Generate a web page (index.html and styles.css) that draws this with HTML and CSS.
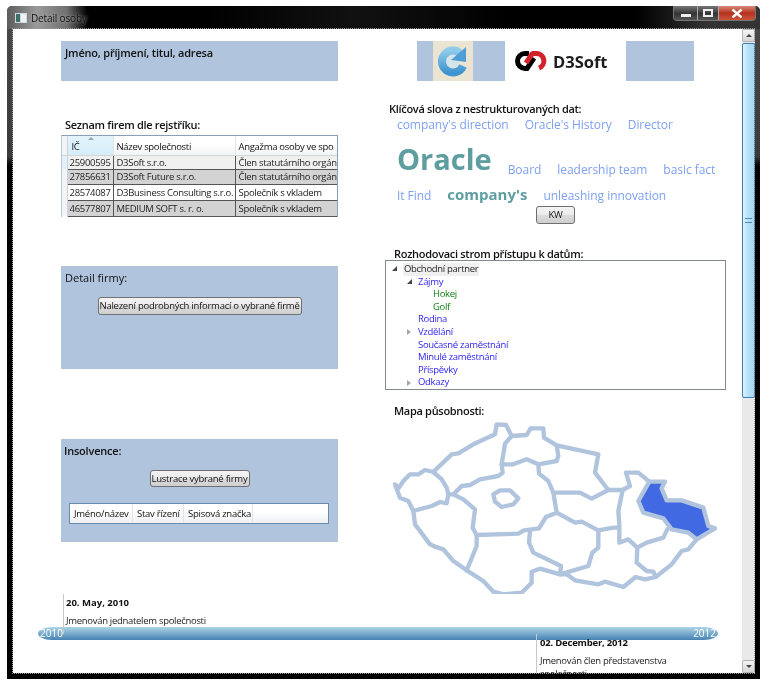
FILE: index.html
```html
<!DOCTYPE html>
<html lang="cs">
<head>
<meta charset="utf-8">
<title>Detail osoby</title>
<link rel="stylesheet" href="styles.css">
</head>
<body>
<div class="window">
  <header class="titlebar">
    <svg class="app-icon" width="12" height="10" viewBox="0 0 12 10"><rect width="12" height="10" fill="#cfd8dc"/><rect x="1" y="1" width="4" height="8" fill="#3d6f6c"/><rect x="6" y="1" width="5" height="8" fill="#eef3f6"/></svg>
    <span class="title">Detail osoby</span>
    <div class="controls">
      <div class="ctl ctl-min"><span class="min-glyph"></span></div>
      <div class="ctl ctl-max"><span class="max-glyph"></span></div>
      <div class="ctl ctl-close"><svg width="12" height="9" viewBox="0 0 12 9"><path d="M1.5 .5 L10.5 8.5 M10.5 .5 L1.5 8.5" stroke="#fff" stroke-width="2.4"/></svg></div>
    </div>
  </header>
  <div class="client">
    <main class="main">
      <div class="columns">
        <section class="left">
          <div class="name-box">Jméno, příjmení, titul, adresa</div>
          <div class="label label-firms">Seznam firem dle rejstříku:</div>
          <div class="grid-wrap">
            <table class="firms">
              <colgroup><col class="c0"><col class="c1"><col class="c2"><col class="c3"></colgroup>
              <thead>
                <tr><th class="gutter"></th><th class="sorted"><span class="sort-arrow"></span>IČ</th><th>Název společnosti</th><th>Angažma osoby ve spo</th></tr>
              </thead>
              <tbody>
                <tr class="r-sel"><td class="gutter"></td><td>25900595</td><td>D3Soft s.r.o.</td><td>Člen statutárního orgán</td></tr>
                <tr class="r-alt r-b"><td class="gutter"></td><td>27856631</td><td>D3Soft Future s.r.o.</td><td>Člen statutárního orgán</td></tr>
                <tr class="r-plain"><td class="gutter"></td><td>28574087</td><td>D3Business Consulting s.r.o.</td><td>Společník s vkladem</td></tr>
                <tr class="r-alt r-d"><td class="gutter"></td><td>46577807</td><td>MEDIUM SOFT s. r. o.</td><td>Společník s vkladem</td></tr>
              </tbody>
            </table>
          </div>
          <div class="panel panel-detail">
            <div class="label panel-title">Detail firmy:</div>
            <div class="center"><button class="btn btn-detail">Nalezení podrobných informací o vybrané firmě</button></div>
          </div>
          <div class="panel panel-insolv">
            <div class="label panel-title">Insolvence:</div>
            <div class="center"><button class="btn btn-lustrace">Lustrace vybrané firmy</button></div>
            <div class="insolv-head">
              <span class="ih ih1">Jméno/název</span><span class="ih ih2">Stav řízení</span><span class="ih ih3">Spisová značka</span>
            </div>
          </div>
        </section>
        <section class="right">
          <div class="banner">
            <div class="b-blue b1"></div>
            <div class="b-icon">
              <svg width="40" height="40" viewBox="0 0 40 40">
                <defs><linearGradient id="swirl" x1="0" y1="0" x2="0" y2="1"><stop offset="0" stop-color="#8ecbea"/><stop offset="1" stop-color="#3f94cf"/></linearGradient></defs>
                <circle cx="19" cy="20" r="7" fill="#d3e4ea"/>
                <path d="M27 12 A11 11 0 1 0 30 25" fill="none" stroke="url(#swirl)" stroke-width="8"/>
                <path d="M33 6 L33 21 L18 19 Z" fill="#4f9fd6"/>
              </svg>
            </div>
            <div class="b-blue b2"></div>
            <div class="b-logo">
              <svg width="33" height="20" viewBox="0 0 33 20"><path d="M15 2.5 H11 A7.5 7.5 0 0 0 11 17.5 H13 L20 7" fill="none" stroke="#000" stroke-width="5"/><path d="M12 12 L18 3 L19 2.5 H22 A7.5 7.5 0 0 1 25 17" fill="none" stroke="#d2232a" stroke-width="5"/></svg>
              <span class="logo-text">D3Soft</span>
            </div>
            <div class="b-blue b3"></div>
          </div>
          <div class="label label-kw">Klíčová slova z nestrukturovaných dat:</div>
          <div class="cloud">
            <div class="cloud-row row-a"><span class="tag">company's direction</span><span class="tag">Oracle's History</span><span class="tag">Director</span></div>
            <div class="cloud-row row-b"><span class="tag-xl">Oracle</span><span class="tag">Board</span><span class="tag">leadership team</span><span class="tag">basic fact</span></div>
            <div class="cloud-row row-c"><span class="tag">It Find</span><span class="tag-l">company's</span><span class="tag">unleashing innovation</span></div>
            <div class="center"><button class="btn btn-kw">KW</button></div>
          </div>
          <div class="label label-tree">Rozhodovaci strom přístupu k datům:</div>
          <div class="tree">
            <div class="node lvl0"><span class="arrow open"></span><span class="sel">Obchodní partner</span></div>
            <div class="node lvl1 blue"><span class="arrow open"></span>Zájmy</div>
            <div class="node lvl2 green"><span class="arrow none"></span>Hokej</div>
            <div class="node lvl2 green"><span class="arrow none"></span>Golf</div>
            <div class="node lvl1 blue"><span class="arrow none"></span>Rodina</div>
            <div class="node lvl1 blue"><span class="arrow closed"></span>Vzdělání</div>
            <div class="node lvl1 blue"><span class="arrow none"></span>Současné zaměstnání</div>
            <div class="node lvl1 blue"><span class="arrow none"></span>Minulé zaměstnání</div>
            <div class="node lvl1 blue"><span class="arrow none"></span>Příspěvky</div>
            <div class="node lvl1 blue"><span class="arrow closed"></span>Odkazy</div>
          </div>
          <div class="label label-map">Mapa působnosti:</div>
          <svg class="map" width="340" height="176" viewBox="15 21 1020 528">
            <g class="regions">
              <path d="M45 220 L57 230 L70 210 L90 190 L115 190 L135 177 L160 183 L185 205 L200 230 L205 250 L200 277 L180 273 L155 285 L100 300 L85 270 L60 260 Z"/>
              <path d="M160 183 L215 130 L235 127 L280 100 L345 70 L350 40 L378 42 L395 75 L440 72 L452 52 L490 52 L492 80 L530 103 L655 130 L645 185 L685 237 L728 237 L750 225 L738 185 L775 185 L808 212"/>
              <path d="M685 237 L635 263 L600 245 L520 245 L505 210 L477 188 L475 160"/>
              <path d="M395 75 L375 98 L365 160 L400 160 L440 145 L475 160 L530 150 L535 135 L530 103"/>
              <path d="M365 160 L368 185 L355 195 L300 205 L270 222 L245 225 L220 250 L205 250 M220 250 L250 265 L285 295 L278 350 L290 372 L415 368 L432 358 L477 352 L498 318 L530 305 L520 245"/>
              <path d="M340 250 L360 238 L390 238 L415 262 L400 280 L365 288 L345 272 Z"/>
              <path d="M100 300 L105 340 L150 400 L165 407 L190 415 L220 450 L260 478 L290 405 L290 372"/>
              <path d="M260 478 L310 510 L340 542 L370 550 L425 545 L455 515 L455 482 L480 473 L540 490 L560 490 L585 508 L655 520 L675 512 L730 528 L767 498 L795 505 L827 498 L875 460 L905 420 L925 415 L950 385"/>
              <path d="M450 360 L447 395 L460 425 L543 465 L540 490 L625 465 L637 425 L655 410 L655 358 L605 332 L585 335 L530 305"/>
              <path d="M655 358 L700 350 L718 350 M728 237 L715 300 L718 340 L718 395 L745 385 L772 410 L770 455 L800 480 L820 482 L827 498 M772 410 L800 395 L850 380 L862 355"/>
              <path class="region-on" d="M808 212 L855 212 L845 232 L860 268 L905 268 L970 290 L985 345 L1005 352 L950 385 L925 365 L875 355 L850 322 L790 305 L775 270 Z"/>
            </g>
          </svg>
        </section>
      </div>
      <section class="timeline">
        <div class="bar"><span>2010</span><span>2012</span></div>
        <div class="event event-a">
          <div class="ev-date">20. May, 2010</div>
          <div class="ev-text">Jmenován jednatelem společnosti</div>
        </div>
        <div class="event event-b">
          <div class="ev-date ev-date-long">02. December, 2012</div>
          <div class="ev-text">Jmenován člen představenstva společnosti</div>
        </div>
      </section>
    </main>
    <aside class="scrollbar">
      <div class="sb-btn"><span class="sb-up"></span></div>
      <div class="sb-track">
        <div class="sb-thumb"><span class="grip"></span></div>
      </div>
      <div class="sb-btn"><span class="sb-down"></span></div>
    </aside>
  </div>
</div>
</body>
</html>
```
FILE: styles.css
```css
* { box-sizing: border-box; }
html, body { margin: 0; padding: 0; background: #fff; }
body { font-family: "Open Sans", "Liberation Sans", sans-serif; color: #111; }

.window {
  width: 753px;
  height: 673px;
  margin: 6px 0 0 7px;
  background: linear-gradient(180deg, #4a4a4a 0, #3a3a3a 150px, #000 160px);
  border-radius: 5px 5px 0 0;
  display: flex;
  flex-direction: column;
  overflow: hidden;
}

/* title bar */
.titlebar {
  height: 23px;
  flex: none;
  display: flex;
  align-items: center;
  padding: 0 4px 0 8px;
  background: linear-gradient(90deg, #5c5c5c 0, #9a9a9a 30px, #707070 60px, #000 80px, #000 200px, #111 350px, #000 500px, #000 630px, #333 700px);
}
.app-icon { flex: none; margin-right: 4px; margin-top: 1px; }
.title { font-size: 10px; letter-spacing: -.15px; color: #111; text-shadow: 0 0 3px #bbb; margin-top: 1px; filter: blur(.3px); }
.controls { margin-left: auto; display: flex; align-self: flex-start; height: 15px; border: 1px solid #777; border-top: 0; border-radius: 0 0 4px 4px; overflow: hidden; }
.ctl { display: flex; align-items: center; justify-content: center; height: 100%; }
.ctl-min { width: 24px; background: linear-gradient(180deg, #777, #333 55%, #555); border-right: 1px solid #aaa; }
.ctl-max { width: 21px; background: linear-gradient(180deg, #777, #333 55%, #555); border-right: 1px solid #aaa; }
.ctl-close { width: 36px; background: linear-gradient(180deg, #d98a78, #b5321e 50%, #c9543c); }
.min-glyph { width: 10px; height: 3px; margin-top: 5px; background: #eee; }
.max-glyph { width: 10px; height: 8px; border: 2px solid #eee; }

/* client area */
.client {
  flex: 1;
  min-height: 0;
  margin: 0 6px 6px 6px;
  background: #fff;
  outline: 1px dotted #999;
  display: flex;
}
.main { width: 729px; flex: none; overflow: hidden; display: flex; flex-direction: column; filter: blur(.35px); }
.columns { display: grid; grid-template-columns: 372px 357px; height: 565px; flex: none; }

/* left column */
.left { padding: 12px 0 0 48px; }
.name-box {
  width: 277px;
  height: 40px;
  background: #b0c4de;
  font-size: 11px;
  font-weight: 600;
  letter-spacing: -.2px;
  line-height: 15px;
  padding: 4px 0 0 4px;
}
.label { font-size: 11px; font-weight: 600; letter-spacing: -.3px; line-height: 14px; color: #111; white-space: nowrap; }
.label-firms { margin-top: 37px; padding-left: 4px; }
.grid-wrap { width: 277px; height: 82px; margin-top: 3px; border: 1px solid #8aa0b8; border-left-color: #b9c6d6; border-bottom-width: 0; overflow: hidden; }
.firms { width: 276px; border-collapse: collapse; table-layout: fixed; font-size: 9.5px; letter-spacing: -.3px; line-height: 13px; }
.c0 { width: 5px; } .c1 { width: 46px; } .c2 { width: 122px; } .c3 { width: 103px; }
.firms th { height: 19px; font-weight: 400; text-align: left; padding: 3px 0 0 3px; white-space: nowrap; overflow: hidden; background: linear-gradient(180deg, #fff 40%, #f2f3f4); border-right: 1px solid #e3e6e9; border-bottom: 1px solid #d5d5d5; }
.firms th.sorted { background: linear-gradient(180deg, #e3f3fc, #d6edfa); position: relative; padding-left: 4px; }
.sort-arrow { position: absolute; left: 20px; top: 1px; width: 0; height: 0; border: 3px solid transparent; border-top: 0; border-bottom: 3px solid #9aa6b2; }
.firms td { height: 15px; padding: 0 0 0 3px; white-space: nowrap; overflow: hidden; border-bottom: 1px solid #555; border-right: 1px solid #555; color: #222; }
.firms td:nth-child(2) { padding-left: 2px; }
.firms td:last-child, .firms th:last-child { border-right: 0; }
.firms .gutter { padding: 0; background: #f4f4f4; border-right: 1px solid #c6d3e0; }
.firms td.gutter { border-bottom: 0; }
.r-sel td { background: #f0f0f0; height: 14px; }
.r-alt td { background: #d3d3d3; }
.r-plain td { background: #fff; height: 16px; }
.r-d td { height: 16px; }
.r-sel td.gutter { background: #e3f1fa; }
.r-plain td.gutter, .r-alt td.gutter { background: #f4f4f4; }

.panel { width: 277px; height: 103px; background: #b0c4de; }
.panel-title { padding: 5px 0 0 4px; line-height: 14px; font-weight: 500; letter-spacing: 0; }
.panel-detail { margin-top: 49px; }
.panel-insolv { margin-top: 70px; }
.panel-insolv .panel-title { font-weight: 600; padding-left: 3px; letter-spacing: -.2px; }
.center { display: flex; justify-content: center; }
.btn {
  font-family: inherit;
  color: #111;
  font-size: 9.5px;
  letter-spacing: -.25px;
  line-height: 12px;
  padding: 0;
  border: 1px solid #707070;
  border-radius: 3px;
  background: linear-gradient(180deg, #f3f3f3 0, #ebebeb 48%, #dcdcdc 52%, #cfcfcf 100%);
  white-space: nowrap;
}
.btn-detail { width: 204px; height: 18px; margin-top: 12px; }
.btn-lustrace { width: 100px; height: 17px; margin-top: 12px; }
.btn-kw { width: 39px; height: 18px; }
.insolv-head {
  width: 260px;
  height: 21px;
  margin: 16px 0 0 8px;
  border: 1px solid #688caf;
  background: linear-gradient(180deg, #fff 40%, #eff0f2);
  display: flex;
  font-size: 9.5px;
  letter-spacing: -.25px;
  line-height: 19px;
}
.ih { padding-left: 4px; border-right: 1px solid #e3e6e9; white-space: nowrap; overflow: hidden; }
.ih1 { width: 63px; } .ih2 { width: 51px; } .ih3 { width: 69px; }

/* right column */
.right { padding-top: 12px; display: flex; flex-direction: column; }
.banner { display: flex; height: 40px; margin-left: 32px; }
.b-blue { background: #b0c4de; }
.b1 { width: 16px; } .b2 { width: 32px; } .b3 { width: 68px; }
.b-icon { width: 40px; background: #ebe4d2; }
.b-logo { width: 121px; display: flex; align-items: center; padding-left: 9px; gap: 6px; }
.logo-text { font-size: 16.5px; font-weight: 700; color: #1d1d1f; }
.label-kw { margin-top: 21px; padding-left: 4px; }
.cloud { width: 341px; height: 122px; padding-top: 1px; display: flex; flex-direction: column; }
.cloud-row { display: flex; padding-left: 12px; gap: 16px; white-space: nowrap; }
.tag { font-size: 12px; letter-spacing: -.05px; line-height: 16px; color: #7ea0f2; }
.tag-xl { font-size: 29px; line-height: 42px; font-weight: 700; color: #5f9ea0; }
.tag-l { font-size: 15px; line-height: 20px; font-weight: 700; color: #5f9ea0; }
.row-a { height: 16px; }
.row-b { height: 47px; align-items: flex-end; }
.row-b .tag { position: relative; top: -2px; }
.row-c { height: 26px; padding-bottom: 2px; align-items: flex-end; }
.label-tree { margin-top: 9px; padding-left: 9px; }
.tree {
  width: 341px;
  height: 130px;
  margin-top: -1px;
  border: 1px solid #828790;
  background: #fff;
  padding-top: 2px;
  font-size: 9.5px;
  letter-spacing: -.3px;
  line-height: 12.6px;
  overflow: hidden;
}
.node { display: flex; align-items: center; white-space: nowrap; height: 12.6px; }
.lvl0 { padding-left: 6px; color: #222; }
.lvl1 { padding-left: 21px; }
.lvl2 { padding-left: 36px; }
.blue { color: #2a1ff0; }
.green { color: #128012; }
.sel { background: #f0f0f0; padding: 0 1px; }
.arrow { width: 11px; flex: none; height: 6px; position: relative; }
.arrow.open::before { content: ""; position: absolute; left: 0; top: 0; width: 0; height: 0; border-style: solid; border-width: 0 0 5px 5px; border-color: transparent transparent #444 transparent; }
.arrow.closed::before { content: ""; position: absolute; left: 0; top: 0; width: 0; height: 0; border-style: solid; border-width: 3px 0 3px 4px; border-color: transparent transparent transparent #a6a6a6; }
.label-map { margin-top: 14px; padding-left: 9px; }
.map { display: block; flex: none; }
.regions path { fill: none; stroke: #b0c4de; stroke-width: 13; stroke-linejoin: round; stroke-linecap: round; }
.regions .region-on { fill: #4169e1; }

/* timeline */
.timeline { position: relative; height: 79px; flex: none; padding: 33px 24px 0 25px; overflow: hidden; }
.bar {
  height: 13px;
  border-radius: 14px / 6.5px;
  background: linear-gradient(180deg, #add6e6 0, #4682b4 100%);
  display: flex;
  justify-content: space-between;
  align-items: center;
  padding: 0 2px;
  color: #fff;
  font-size: 10px;
  line-height: 13px;
}
.event { position: absolute; border-left: 1px solid #c8c8c8; padding-left: 2px; font-size: 9.5px; letter-spacing: -.3px; color: #222; }
.ev-date { font-weight: 700; color: #111; line-height: 14px; letter-spacing: 0; }
.ev-date-long { letter-spacing: -.2px; }
.ev-text { line-height: 13px; }
.event-a { left: 50px; top: 0; height: 40px; width: 200px; padding-top: 2px; }
.event-a .ev-text { margin-top: 4px; }
.event-b { left: 523px; top: 40px; height: 39px; width: 150px; padding-top: 2px; padding-left: 3px; }
.event-b .ev-text { margin-top: 4px; }

/* scrollbar */
.scrollbar { width: 13px; flex: none; display: flex; flex-direction: column; background: #e9e9e9; }
.sb-btn { height: 13px; flex: none; border: 1px solid #b5b5b5; border-radius: 2px; background: linear-gradient(180deg, #f5f5f5, #d6d6d6); display: flex; align-items: center; justify-content: center; }
.sb-up, .sb-down { width: 0; height: 0; border: 3px solid transparent; }
.sb-up { border-top: 0; border-bottom: 3px solid #444; }
.sb-down { border-bottom: 0; border-top: 3px solid #444; }
.sb-track { flex: 1; min-height: 0; padding-top: 1px; }
.sb-thumb { height: 355px; border: 1px solid #3c7fb1; border-radius: 2px; background: linear-gradient(90deg, #dff2fc, #b3e0f9 50%, #a5d8f5); display: flex; align-items: center; justify-content: center; }
.grip { width: 7px; height: 5px; border-top: 1px solid #5b88a8; border-bottom: 1px solid #5b88a8; position: relative; }
```
